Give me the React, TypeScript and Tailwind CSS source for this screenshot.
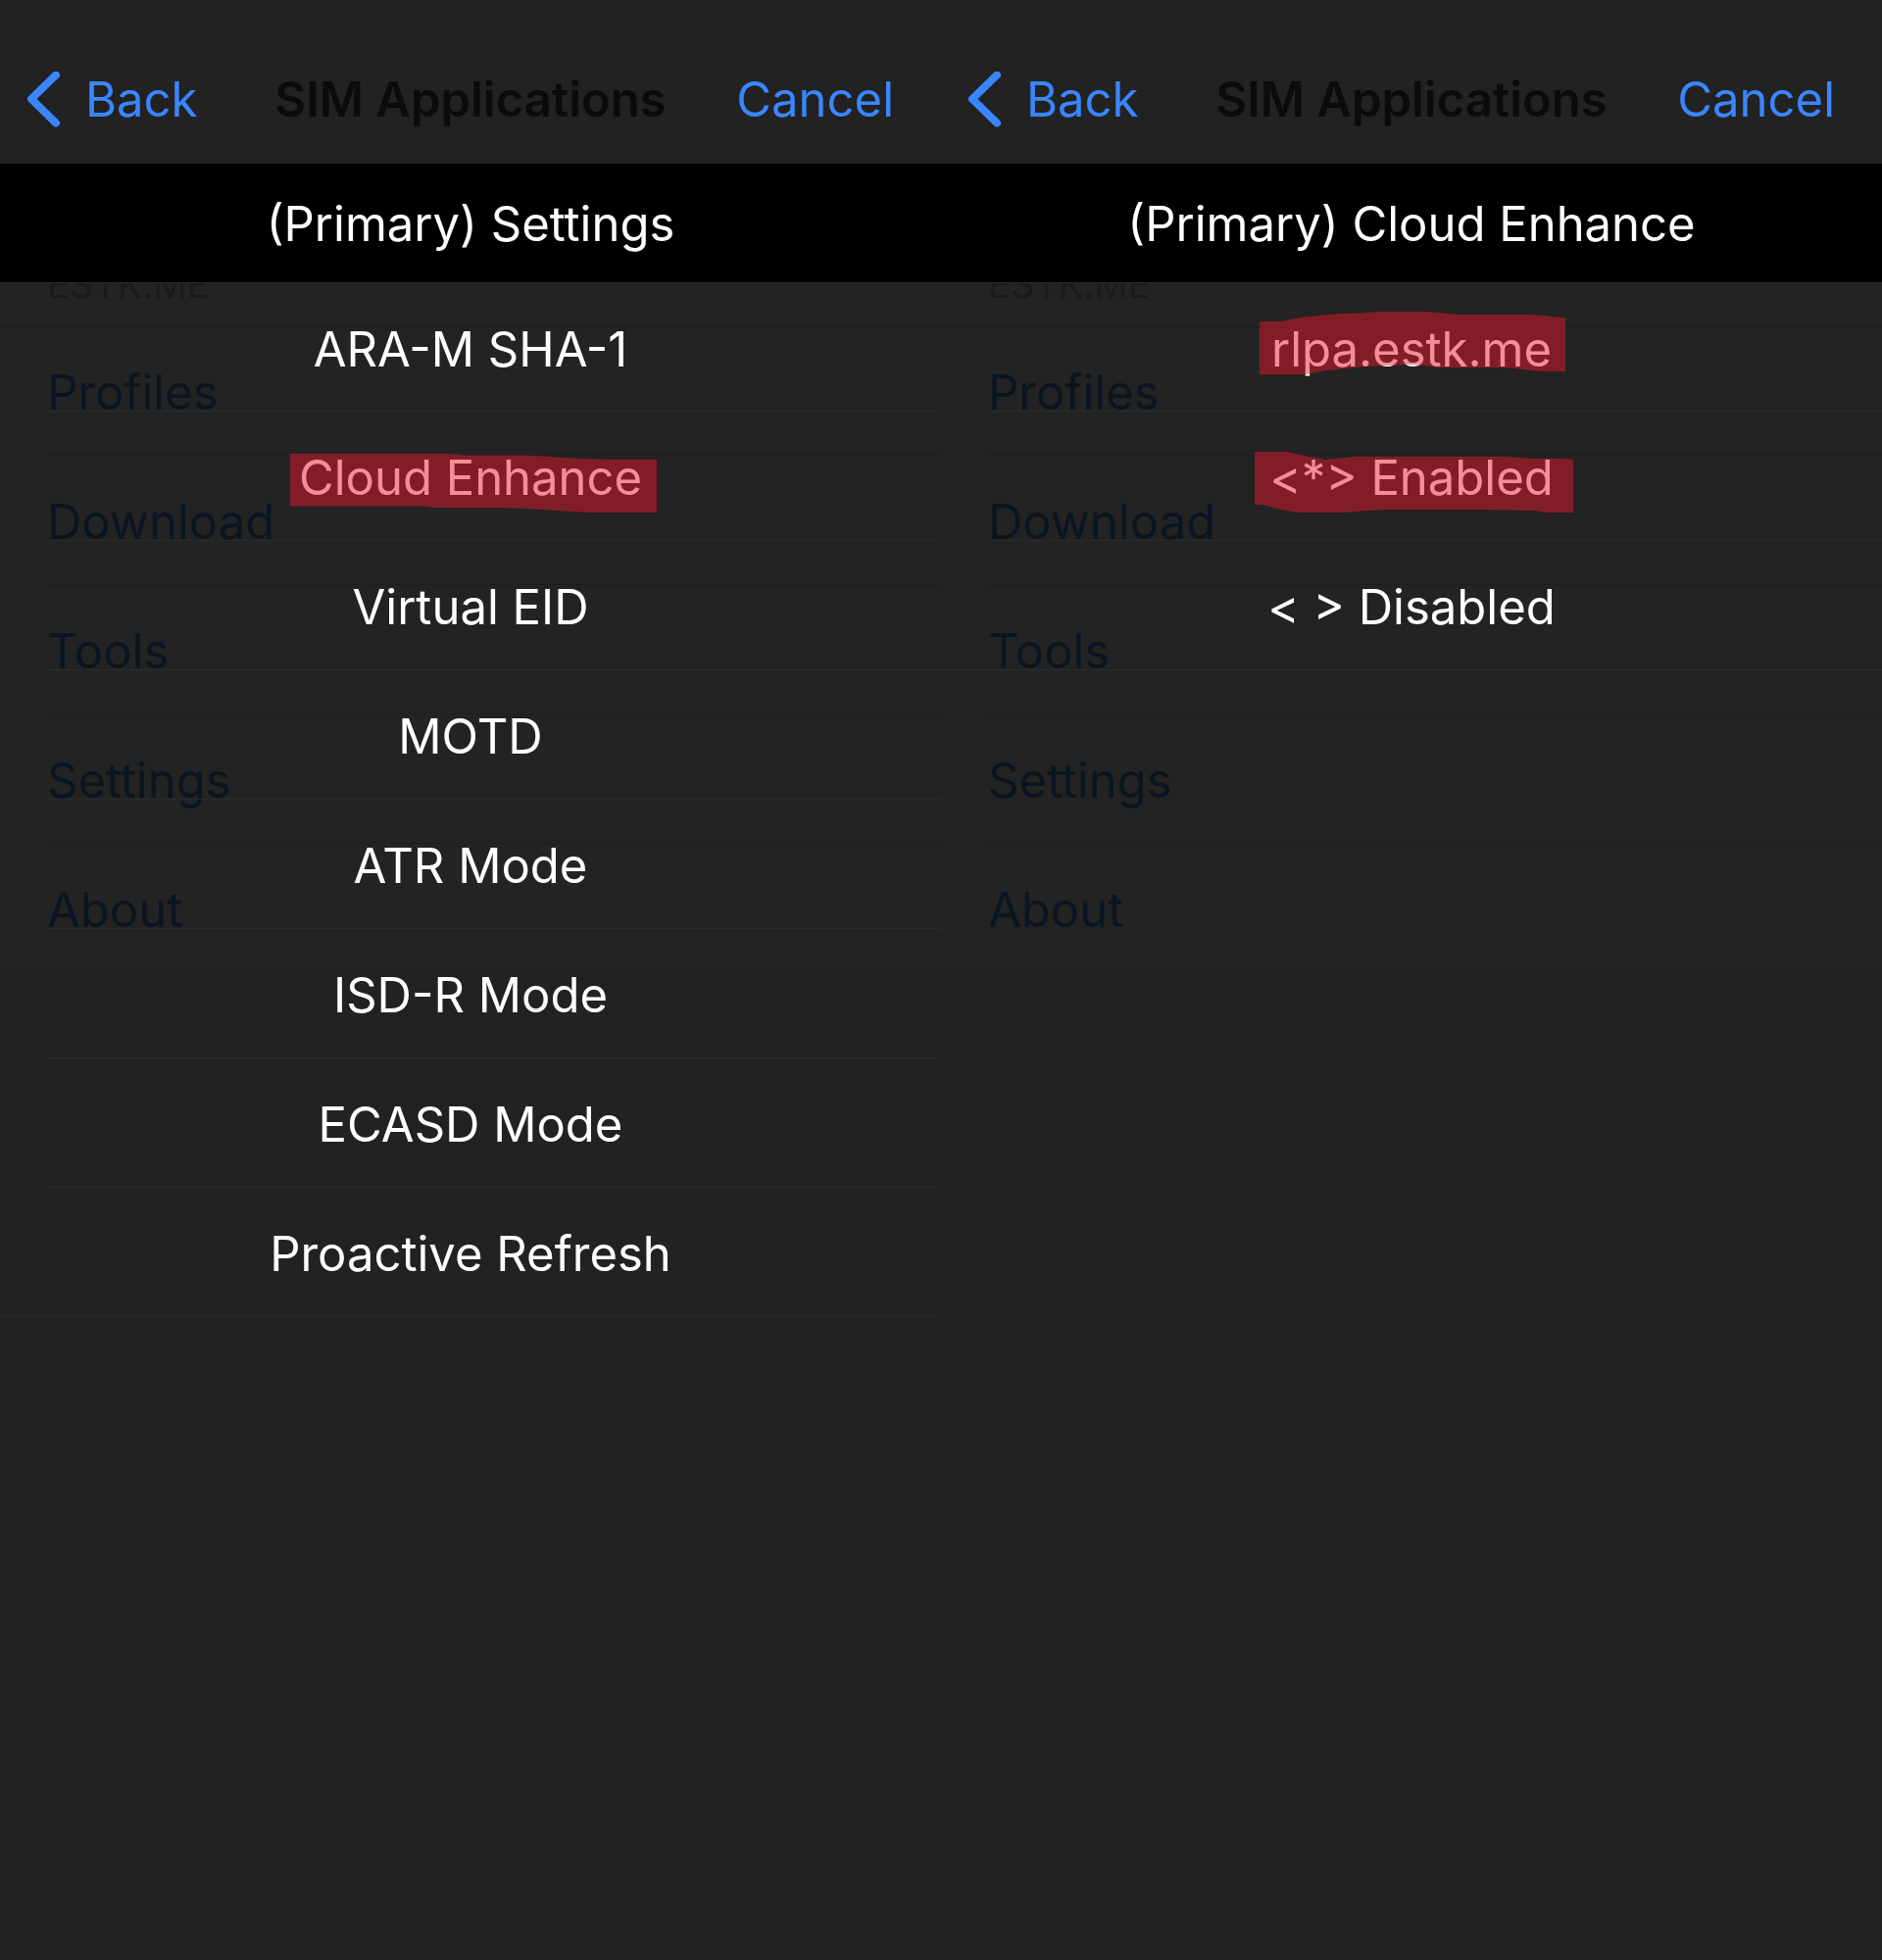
type Item = { label: string; mark?: string };
type Panel = { title: string; items: Item[] };

const SECTIONS = ["Profiles", "Download", "Tools", "Settings", "About"];

// Marker strokes are drawn in a 400x132 box centred on the row.
const PANELS: Panel[] = [
  {
    title: "(Primary) Settings",
    items: [
      { label: "ARA-M SHA-1" },
      {
        label: "Cloud Enhance",
        mark: "M16 43H177L193 44.5H257L310 48L343 49H390V103H325L303 102L257 99L230 98H163L150 96.500H16Z",
      },
      { label: "Virtual EID" },
      { label: "MOTD" },
      { label: "ATR Mode" },
      { label: "ISD-R Mode" },
      { label: "ECASD Mode" },
      { label: "Proactive Refresh" },
    ],
  },
  {
    title: "(Primary) Cloud Enhance",
    items: [
      {
        label: "rlpa.estk.me",
        mark: "M45 39H67Q78 36 90 34.500L127 31L150 30.500L165 29H213L250 32H323L357 35.500V90H332L297 86H227Q212 83 197 83L153 85L113 89L93 93H45Z",
      },
      {
        label: "<*> Enabled",
        mark: "M40 41H73L90 45L112 49L143 46H297L323 48H357L365 49V103H337L327 101L273 100H170L130 103H90Q74 102 63 99L47 95H40Z",
      },
      { label: "< > Disabled" },
    ],
  },
];

function NavBar() {
  return (
    <header className="grid h-[167px] grid-cols-[1fr_auto_1fr] items-center bg-[#222222] pt-9">
      <button type="button" className="flex items-center gap-[25px] justify-self-start pl-7 text-[#3a86ff]">
        <svg
          viewBox="0 0 34 58"
          className="h-[58px] w-[34px]"
          fill="none"
          stroke="currentColor"
          strokeWidth="8"
          strokeLinecap="round"
          strokeLinejoin="round"
          aria-hidden="true"
        >
          <path d="M29 3.500L4 28L29 52.500" />
        </svg>
        Back
      </button>
      <h1 className="font-semibold text-[#0b0b0b]">SIM Applications</h1>
      <button type="button" className="justify-self-end pr-12 text-[#3a86ff]">
        Cancel
      </button>
    </header>
  );
}

function BackgroundMenu() {
  return (
    <div className="col-start-1 row-start-1 text-[#0a1521]" aria-hidden="true">
      <div className="flex h-[167px] items-end border-b border-[#1e1e1e] bg-[#232323] pb-[19px] pl-12 text-[38px] leading-[48px] text-[#1a1a1a]">
        ESTK.ME
      </div>
      <ul className="border-b border-[#1e1e1e] bg-[#232323] pl-12">
        {SECTIONS.map((name) => (
          <li
            key={name}
            className="flex h-[132px] items-center border-b border-[#1e1e1e] pt-1 first:h-[131px] last:h-[131px] last:border-b-0"
          >
            {name}
          </li>
        ))}
      </ul>
    </div>
  );
}

function Screen({ title, items }: Panel) {
  return (
    <section className="min-w-0 overflow-hidden">
      <NavBar />
      <div className="grid">
        <BackgroundMenu />
        <div className="z-10 col-start-1 row-start-1 text-white">
          <h2 className="flex h-[121px] items-center justify-center bg-black pt-0.5">{title}</h2>
          <ul>
            {items.map((item) => (
              <li
                key={item.label}
                className="group relative h-[132px] first:border-t first:border-[#2b2b2b] last:border-b last:border-[#2b2b2b]"
              >
                <button type="button" className="flex size-full items-center justify-center pt-1">
                  {item.label}
                </button>
                <div className="pointer-events-none absolute inset-0 ml-12 border-b border-[#2b2b2b] group-last:border-b-0" />
                {item.mark && (
                  <svg
                    viewBox="0 0 400 132"
                    className="pointer-events-none absolute inset-0 m-auto h-[132px] w-[400px]"
                    aria-hidden="true"
                  >
                    <path d={item.mark} fill="#e7192d" fillOpacity="0.49" />
                  </svg>
                )}
              </li>
            ))}
          </ul>
        </div>
      </div>
    </section>
  );
}

export default function App() {
  return (
    <main className="grid min-h-screen grid-cols-2 bg-[#222222] font-[Inter,sans-serif] text-[49px] leading-[60px] whitespace-nowrap">
      {PANELS.map((panel) => (
        <Screen key={panel.title} {...panel} />
      ))}
    </main>
  );
}
